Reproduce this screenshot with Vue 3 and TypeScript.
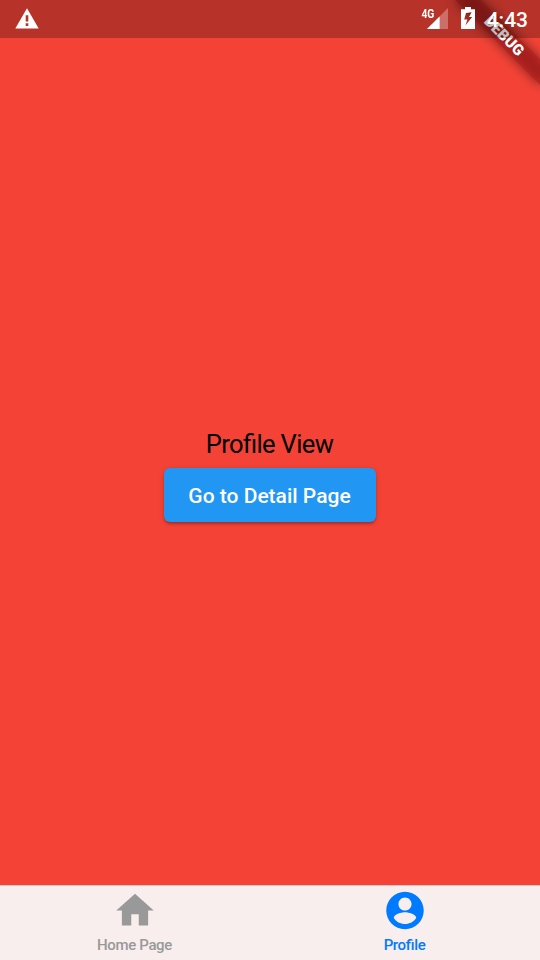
<script setup lang="ts">
import { ref } from 'vue'

interface Tab {
  label: string
  viewBox: string
  icon: string
}

const tabs: Tab[] = [
  { label: 'Home Page', viewBox: '0 0 24 24', icon: 'M10 20v-6h4v6h5v-8h3L12 3 2 12h3v8z' },
  {
    label: 'Profile',
    viewBox: '0 0 24 24',
    icon: 'M12 2C6.48 2 2 6.48 2 12s4.48 10 10 10 10-4.48 10-10S17.52 2 12 2zm0 3c1.93 0 3.5 1.57 3.5 3.5S13.93 12 12 12s-3.5-1.57-3.5-3.5S10.07 5 12 5zm0 14.2c-2.5 0-4.71-1.28-6-3.22.03-1.99 4-3.08 6-3.08 1.99 0 5.97 1.09 6 3.08-1.29 1.94-3.5 3.22-6 3.22z',
  },
]
const active = ref(1)
</script>

<template>
  <div class="screen">
    <div class="banner"><span>DEBUG</span></div>

    <header class="status">
      <svg class="warning" width="24" height="21" viewBox="0 0 24 21">
        <path fill="#fff" fill-rule="evenodd" d="M12 0.3 23.7 20.5H0.3zM10.7 7.2v6.4h2.6v-6.4zM10.7 15.3v2.6h2.6v-2.6z" />
      </svg>
      <div class="network">
        <span class="network-type">4G</span>
        <svg class="signal" width="21" height="21" viewBox="0 0 21 21">
          <path fill="#fff" fill-opacity=".3" d="M21 0v21H0z" />
          <path fill="#fff" d="M12.6 8.4V21H0z" />
        </svg>
      </div>
      <svg class="battery" width="14" height="22" viewBox="0 0 14 22">
        <path fill="#fff" fill-rule="evenodd" d="M4 0h6v2.3h4V22H0V2.3h4zM5 6 3.2 12.5h3.2L4.4 18.4 11.2 10H8L10.6 5.2z" />
      </svg>
      <time class="clock">4:43</time>
    </header>

    <main class="content">
      <p class="title">Profile View</p>
      <button class="action" type="button">Go to Detail Page</button>
    </main>

    <nav class="tabs">
      <button
        v-for="(tab, i) in tabs"
        :key="tab.label"
        type="button"
        class="tab"
        :class="{ active: active === i }"
        @click="active = i"
      >
        <svg class="tab-icon" :viewBox="tab.viewBox"><path fill="currentColor" :d="tab.icon" /></svg>
        <span class="tab-label">{{ tab.label }}</span>
      </button>
    </nav>
  </div>
</template>

<style>
body {
  margin: 0;
}
</style>

<style scoped>
.screen {
  position: relative;
  display: flex;
  flex-direction: column;
  width: 540px;
  height: 960px;
  overflow: hidden;
  background: #f44336;
  font-family: Roboto, sans-serif;
}
.banner {
  position: absolute;
  left: 443.9px;
  top: 27.1px;
  width: 120px;
  height: 18px;
  transform: rotate(45deg);
}
.banner::before {
  content: '';
  position: absolute;
  inset: 0;
  background: rgba(0, 0, 0, 0.5);
  filter: blur(5.9px);
}
.banner span {
  position: absolute;
  inset: 0;
  background: rgba(183, 28, 28, 0.627);
  color: #fff;
  font-size: 15.3px;
  font-weight: 900;
  line-height: 18px;
  text-align: center;
}
.status {
  position: relative;
  display: flex;
  box-sizing: border-box;
  height: 38px;
  padding: 0 12px 0 15px;
  background: rgba(0, 0, 0, 0.25);
  color: #fff;
}
.warning {
  margin-top: 8px;
}
.network {
  display: flex;
  margin-left: auto;
}
.network-type {
  margin: 6px -9px 0 0;
  font-size: 12.5px;
  font-weight: 700;
  line-height: 15px;
  transform: scaleX(0.82);
}
.signal {
  margin-top: 8px;
}
.battery {
  margin: 7px 11.6px 0 13px;
}
.clock {
  font-size: 21px;
  font-weight: 500;
  line-height: 40px;
}
.content {
  flex: 1;
  display: flex;
  flex-direction: column;
  align-items: center;
  justify-content: center;
}
.title {
  margin: 28px 0 9px;
  padding-right: 1px;
  color: #000;
  font-size: 25.5px;
  line-height: 30px;
  letter-spacing: -0.61px;
  font-feature-settings: 'liga' 1;
}
.action {
  width: 212px;
  height: 54px;
  padding: 2px 1px 0 0;
  border: 0;
  border-radius: 6px;
  background: #2196f3;
  box-shadow: 0 3px 3px -2px rgba(0, 0, 0, 0.2), 0 2px 3px rgba(0, 0, 0, 0.14), 0 1px 6px rgba(0, 0, 0, 0.12);
  color: #fff;
  font: 500 21px/24px Roboto, sans-serif;
}
.tabs {
  display: flex;
  box-sizing: border-box;
  height: 75px;
  border-top: 1px solid #d5c5c4;
  background: #f8eeed;
}
.tab {
  flex: 1;
  display: flex;
  flex-direction: column;
  align-items: center;
  padding: 2px 0 0;
  border: 0;
  background: none;
  color: #999;
  font: 500 15px/18px Roboto, sans-serif;
  letter-spacing: -0.36px;
  font-feature-settings: 'liga' 1;
}
.tab.active {
  color: #007aff;
}
.tab-icon {
  width: 46px;
  height: 45px;
  margin-bottom: 3px;
}
.tab-label {
  padding-right: 1px;
}
</style>
